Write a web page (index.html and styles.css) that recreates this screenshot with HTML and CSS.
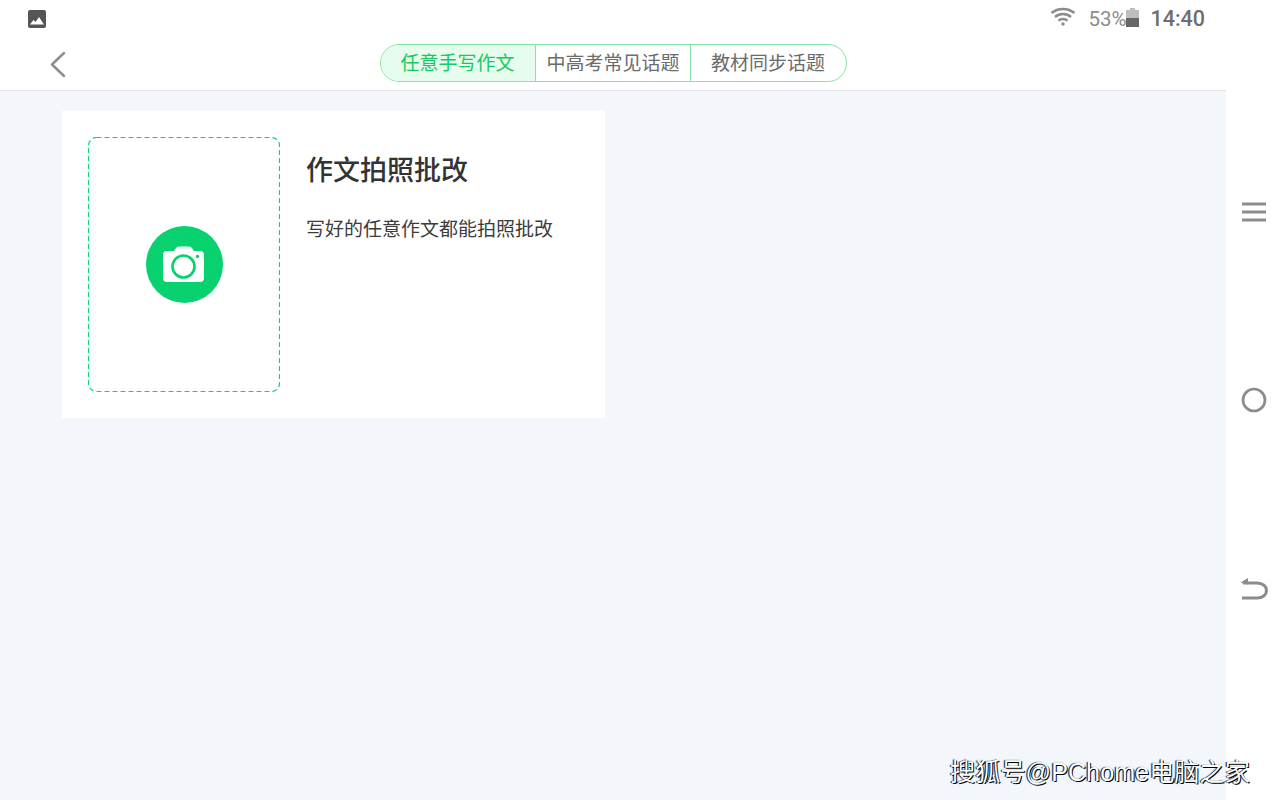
FILE: index.html
```html
<!DOCTYPE html>
<html lang="zh-CN">
<head>
  <meta charset="UTF-8">
  <meta name="viewport" content="width=device-width, initial-scale=1.0">
  <title>作文拍照批改</title>
  <link rel="stylesheet" href="styles.css">
</head>
<body>
  <div class="screen">
    <div class="app">
      <!-- Status bar -->
      <div class="status-bar">
        <svg class="status-image" width="20" height="20" viewBox="0 0 20 20">
          <rect x="1" y="1" width="18" height="18" rx="2" fill="#555"/>
          <path d="M3 15.5 L6.5 11 L8.5 13 L12 8 L17 15.5 Z" fill="#fff"/>
        </svg>
        <div class="status-right">
          <svg class="wifi" width="26" height="20" viewBox="0 0 26 20" fill="none" stroke="#8c8c8c" stroke-width="2.5">
            <path d="M1.5 6 C8 0.5 18 0.5 24.5 6"/>
            <path d="M5 10 C9.5 6 16.5 6 21 10"/>
            <path d="M8.5 13.7 C11 11.5 15 11.5 17.5 13.7"/>
            <circle cx="13" cy="17" r="1.7" fill="#8c8c8c" stroke="none"/>
          </svg>
          <span class="battery-text">53%</span>
          <span class="battery"><span class="battery-cap"></span><span class="battery-body"><span class="battery-level"></span></span></span>
          <span class="clock">14:40</span>
        </div>
      </div>

      <!-- Header with tabs -->
      <div class="header">
        <svg class="back" width="16" height="27" viewBox="0 0 16 27" fill="none" stroke="#8e8e8e" stroke-width="2.5" stroke-linecap="round" stroke-linejoin="round">
          <path d="M14 2 L2 13.5 L14 25"/>
        </svg>
        <div class="tabs">
          <div class="tab tab-active">任意手写作文</div>
          <div class="tab tab-middle">中高考常见话题</div>
          <div class="tab tab-last">教材同步话题</div>
        </div>
      </div>

      <!-- Content -->
      <div class="content">
        <div class="card">
          <div class="photo-box">
            <svg class="dash-frame" width="192" height="255" viewBox="0 0 192 255">
              <rect x="0.5" y="0.5" width="191" height="254" rx="8" fill="none" stroke="#05d870" stroke-width="1.2" stroke-dasharray="5 3"/>
            </svg>
            <div class="photo-btn">
              <svg width="44" height="38" viewBox="0 0 44 38">
                <path d="M4 5 H12 L14 2 Q15 0.5 17 0.5 H27 Q29 0.5 30 2 L32 5 H38 Q42 5 42 9 V32 Q42 36 38 36 H5 Q1 36 1 32 V9 Q1 5 4 5 Z" fill="#fff"/>
                <circle cx="21.5" cy="20.5" r="11" fill="none" stroke="#07d26f" stroke-width="2.6"/>
                <circle cx="35.5" cy="10.5" r="1.8" fill="#07d26f"/>
              </svg>
            </div>
          </div>
          <div class="card-text">
            <h2 class="card-title">作文拍照批改</h2>
            <p class="card-desc">写好的任意作文都能拍照批改</p>
          </div>
        </div>
      </div>
    </div>

    <!-- Android nav bar -->
    <div class="nav-bar">
      <div class="nav-item">
        <svg width="26" height="22" viewBox="0 0 26 22" fill="none" stroke="#8c8c8c" stroke-width="3">
          <path d="M1 3 H25"/>
          <path d="M1 11 H25"/>
          <path d="M1 19 H25"/>
        </svg>
      </div>
      <div class="nav-item">
        <svg width="26" height="26" viewBox="0 0 26 26" fill="none" stroke="#8c8c8c" stroke-width="2.7">
          <circle cx="13" cy="13" r="11"/>
        </svg>
      </div>
      <div class="nav-item">
        <svg width="28" height="24" viewBox="0 0 28 24" fill="none" stroke="#8c8c8c" stroke-width="3">
          <path d="M2 22 H17 C23 22 26.5 18.5 26.5 14.5 C26.5 10.5 23 7 17 7 H3"/>
          <path d="M8 2.5 L1.5 6.5 L8 8" fill="#8c8c8c" stroke-width="1"/>
        </svg>
      </div>
    </div>
  </div>

  <div class="watermark">搜狐号@PChome电脑之家</div>
</body>
</html>
```

FILE: styles.css
```css
/* General page styles */
body {
  margin: 0;
  padding: 0;
  font-family: "Roboto", "Noto Sans CJK SC", sans-serif;
  color: #333;
  background-color: #fff;
}

.screen {
  position: relative;
  display: flex;
  width: 1280px;
  height: 800px;
  overflow: hidden;
}

.app {
  display: flex;
  flex-direction: column;
  width: 1226px;
}

/* Status bar */
.status-bar {
  display: flex;
  justify-content: space-between;
  align-items: center;
  height: 37px;
  padding: 0 21px 0 27px;
  box-sizing: border-box;
  background-color: #fff;
}

.status-image {
  display: block;
}

.status-right {
  display: flex;
  align-items: center;
}

.wifi {
  margin-right: 12px;
  margin-bottom: 3px;
}

.battery-text {
  font-size: 20.5px;
  color: #8c8c8c;
}

.battery {
  display: flex;
  flex-direction: column;
  align-items: center;
  width: 13px;
  margin-bottom: 3px;
}

.battery-cap {
  width: 5px;
  height: 2px;
  background-color: #bdbdbd;
}

.battery-body {
  display: flex;
  flex-direction: column;
  justify-content: flex-end;
  width: 13px;
  height: 17px;
  background-color: #bdbdbd;
}

.battery-level {
  height: 9px;
  background-color: #666;
}

.clock {
  margin-left: 11px;
  font-size: 21.5px;
  font-weight: 500;
  color: #6e6e6e;
}

/* Header */
.header {
  display: grid;
  grid-template-columns: 1fr auto 1fr;
  align-items: center;
  height: 54px;
  box-sizing: border-box;
  border-bottom: 1px solid #e4e6ea;
  background-color: #fff;
}

.back {
  margin-left: 50px;
  margin-top: 1px;
}

.tabs {
  display: flex;
  height: 38px;
  margin-bottom: 1px;
  box-sizing: border-box;
  border: 1px solid #86e4a6;
  border-radius: 19px;
  overflow: hidden;
}

.tab {
  display: flex;
  justify-content: center;
  align-items: center;
  padding-bottom: 3px;
  font-size: 19px;
  color: #6b6b6b;
  box-sizing: border-box;
}

.tab-active {
  width: 155px;
  color: #17c964;
  background-color: #e6fcec;
  border-right: 1px solid #86e4a6;
}

.tab-middle {
  width: 155px;
  padding-left: 1px;
  border-right: 1px solid #86e4a6;
}

.tab-last {
  width: 155px;
}

/* Content */
.content {
  flex: 1;
  padding: 20px 0 0 62px;
  background-color: #f3f6fa;
}

.card {
  display: flex;
  width: 543px;
  height: 307px;
  padding: 26px;
  box-sizing: border-box;
  background-color: #fff;
}

.photo-box {
  position: relative;
  display: flex;
  justify-content: center;
  align-items: center;
  width: 192px;
  height: 255px;
  box-sizing: border-box;
}

.dash-frame {
  position: absolute;
  left: 0;
  top: 0;
}

.photo-btn {
  display: flex;
  justify-content: center;
  align-items: center;
  width: 77px;
  height: 77px;
  margin-bottom: 1px;
  border-radius: 50%;
  background-color: #07d26f;
}

.photo-btn svg {
  margin-top: 2px;
}

.card-text {
  margin-left: 26px;
}

.card-title {
  margin: 14px 0 0;
  font-size: 27px;
  line-height: 40px;
  font-weight: 500;
  color: #333;
}

.card-desc {
  margin: 25px 0 0;
  font-size: 19px;
  line-height: 28px;
  color: #3c3c3c;
}

/* Nav bar on the right */
.nav-bar {
  display: flex;
  flex-direction: column;
  align-items: center;
  gap: 156px;
  width: 54px;
  padding: 196px 0 0 1px;
  box-sizing: border-box;
  background-color: #fff;
}

.nav-item {
  display: flex;
  justify-content: center;
  align-items: center;
  height: 32px;
}

/* Watermark over the screenshot */
.watermark {
  position: absolute;
  left: 950px;
  top: 755px;
  font-family: "Liberation Sans", "Noto Sans CJK SC", sans-serif;
  font-size: 25.2px;
  line-height: 34px;
  white-space: nowrap;
  color: #fff;
  text-shadow: 1px 1px 0 #000, -1px 0 1px #000;
}
```
